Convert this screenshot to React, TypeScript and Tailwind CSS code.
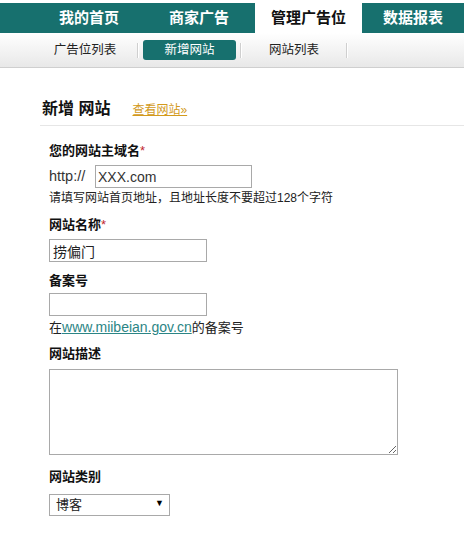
import React from 'react';

const font = { fontFamily: '"Liberation Sans", "Noto Sans CJK SC", sans-serif' };

const mainTabs = [
    { label: '我的首页', width: 'w-[108px]', active: false },
    { label: '商家广告', width: 'w-[112px]', active: false },
    { label: '管理广告位', width: 'w-[107px]', active: true },
    { label: '数据报表', width: 'flex-1', active: false },
];

const Separator = () => <span className="h-[15px] w-px bg-[#cfcfcf] border-r border-white box-content" />;

const Label: React.FC<{ text: string; required?: boolean; className?: string }> = ({ text, required, className }) => (
    <div className={`text-[13px] leading-[16px] font-bold text-[#111] ${className ?? ''}`}>
        {text}
        {required && <span className="text-[#c0272d] font-normal">*</span>}
    </div>
);

const App: React.FC = () => {
    return (
        <div className="w-[464px] h-[539px] bg-white overflow-hidden pt-[3px] text-[#222]" style={font}>
            {/* main nav */}
            <div className="flex h-[30px] bg-[#17706e] pl-[35px]">
                {mainTabs.map(tab => (
                    <div
                        key={tab.label}
                        className={`${tab.width} flex items-center justify-center text-[15px] font-bold ${tab.active ? 'bg-white text-[#111]' : 'text-white'}`}
                    >
                        {tab.label}
                    </div>
                ))}
            </div>

            {/* sub nav */}
            <div className="flex items-center h-[35px] pl-[33px] bg-gradient-to-b from-white to-[#e8e8e8] border-b border-[#cfcfcf] text-[12.5px]">
                <div className="w-[104px] text-center text-[#222]">广告位列表</div>
                <Separator />
                <div className="mx-[4px] w-[93px] h-[20px] rounded-[3px] bg-[#17706e] text-white flex items-center justify-center">新增网站</div>
                <Separator />
                <div className="w-[104px] text-center text-[#222]">网站列表</div>
                <Separator />
            </div>

            <div className="ml-[40px]">
                {/* heading */}
                <div className="mt-[31px] h-[27px] border-b border-[#e6e6e6] flex items-start pl-[2px]">
                    <span className="text-[16px] leading-[20px] font-bold text-[#111]">新增 网站</span>
                    <a className="ml-[22px] mt-[3px] text-[12px] leading-[16px] text-[#d39a1c] underline">查看网站»</a>
                </div>

                {/* form */}
                <div className="pl-[9px]">
                    <Label text="您的网站主域名" required className="mt-[17px]" />
                    <div className="mt-[6px] flex items-center">
                        <span className="text-[14.5px] text-[#333] w-[46px]">http://</span>
                        <input
                            defaultValue="XXX.com"
                            className="w-[157px] h-[23px] border border-[#a9a9a9] px-[2px] text-[14px] text-[#333] outline-none"
                            style={font}
                        />
                    </div>
                    <div className="mt-[2px] text-[12px] leading-[16px] text-[#222]">请填写网站首页地址，且地址长度不要超过128个字符</div>

                    <Label text="网站名称" required className="mt-[11px]" />
                    <input
                        defaultValue="捞偏门"
                        className="block mt-[6px] w-[158px] h-[23px] border border-[#a9a9a9] px-[3px] text-[14px] text-[#222] outline-none"
                        style={font}
                    />

                    <Label text="备案号" className="mt-[11px]" />
                    <input className="block mt-[4px] w-[158px] h-[23px] border border-[#a9a9a9] outline-none" />
                    <div className="mt-[3px] text-[13px] leading-[16px] text-[#222]">
                        在<a className="text-[14px] text-[#2b8585] underline">www.miibeian.gov.cn</a>的备案号
                    </div>

                    <Label text="网站描述" className="mt-[10px]" />
                    <textarea className="block mt-[7px] w-[349px] h-[86px] border border-[#a9a9a9] outline-none" />

                    <Label text="网站类别" className="mt-[14px]" />
                    <div className="relative mt-[7px] w-[121px] h-[22px]">
                        <select
                            defaultValue="博客"
                            className="appearance-none w-full h-full border border-[#a9a9a9] bg-white pl-[6px] text-[13px] text-[#222] outline-none"
                            style={font}
                        >
                            <option>博客</option>
                        </select>
                        <span className="absolute right-[6px] top-[5px] text-[9px] leading-[12px] text-black pointer-events-none">▼</span>
                    </div>
                </div>
            </div>
        </div>
    );
};

export default App;
